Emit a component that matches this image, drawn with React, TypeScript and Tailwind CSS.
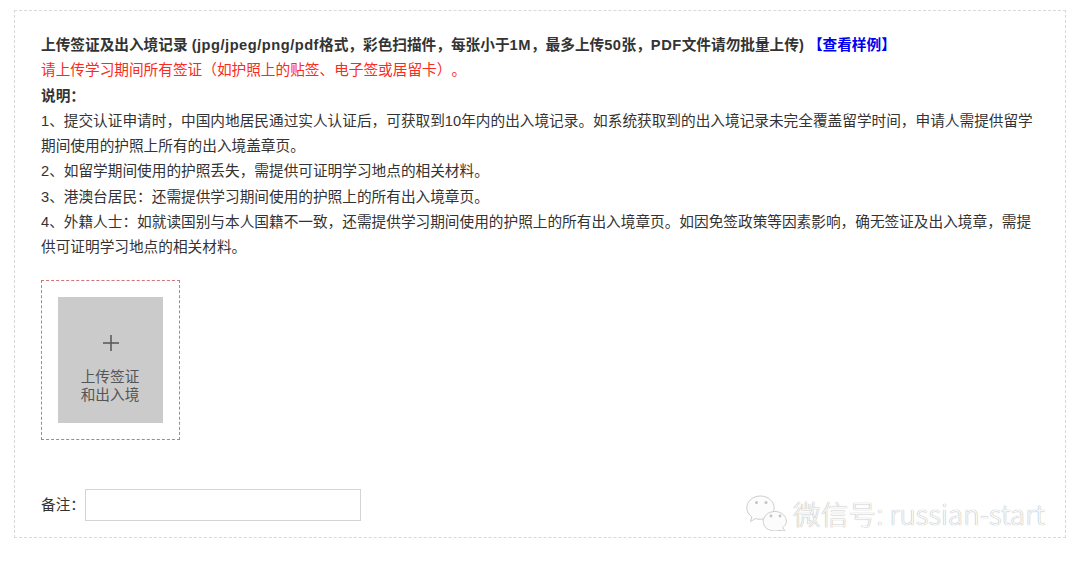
const FONT = 'font-["Liberation_Sans","Noto_Sans_CJK_SC",sans-serif]'

function WechatIcon() {
  return (
    <svg width="41" height="36" viewBox="0 0 41 36" fill="#fcfcfc" stroke="#cdcdcd" strokeWidth="1">
      <path d="M14.500 1C6.800 1 .8 6.300 .8 12.800c0 3.700 2 6.900 5 9l-1.300 4.700 5-2.900c1.600.5 3.200.7 5 .7 7.700 0 13.700-5.300 13.700-11.500S22.200 1 14.500 1z" />
      <path d="M29 16.500c-6.400 0-11.800 4.400-11.800 10s5.400 9.500 11.800 9.500c1.400 0 2.700-.2 4-.6l6 .6-2.400-3.400c2.300-1.700 3.800-3.600 3.800-6.100 0-5.600-5-10-11.400-10z" />
      <circle cx="10.500" cy="7.500" r="1.500" fill="#c4c4c4" stroke="none" />
      <circle cx="20" cy="7.500" r="1.500" fill="#c4c4c4" stroke="none" />
      <circle cx="25" cy="21" r="1.400" fill="#c4c4c4" stroke="none" />
      <circle cx="34" cy="21" r="1.400" fill="#c4c4c4" stroke="none" />
    </svg>
  )
}

function Latin({ children }: { children: string }) {
  return <span className="tracking-[0.5px]">{children}</span>
}

export default function App() {
  return (
    <div className={`w-[1080px] h-[562px] bg-white pt-[10px] pl-[14px] overflow-hidden [text-spacing-trim:space-all] ${FONT}`}>
      <div className="relative w-[1052px] h-[528px] border border-dashed border-[#d9d9d9] pl-[26px] pr-[24px] pt-[22px]">
        <div className="text-[14.67px] leading-[25.3px] text-[#333333]">
          <p className="font-bold whitespace-nowrap">
            上传签证及出入境记录 <Latin>(jpg/jpeg/png/pdf</Latin>格式，彩色扫描件，每张小于<Latin>1M</Latin>，最多上传<Latin>50</Latin>张，<Latin>PDF</Latin>文件请勿批量上传) <span className="text-[#0000ee]">【查看样例】</span>
          </p>
          <p className="text-[#fa2a1e]">请上传学习期间所有签证（如护照上的贴签、电子签或居留卡）。</p>
          <p className="font-bold">说明：</p>
          <p>1、提交认证申请时，中国内地居民通过实人认证后，可获取到10年内的出入境记录。如系统获取到的出入境记录未完全覆盖留学时间，申请人需提供留学期间使用的护照上所有的出入境盖章页。</p>
          <p>2、如留学期间使用的护照丢失，需提供可证明学习地点的相关材料。</p>
          <p>3、港澳台居民：还需提供学习期间使用的护照上的所有出入境章页。</p>
          <p>4、外籍人士：如就读国别与本人国籍不一致，还需提供学习期间使用的护照上的所有出入境章页。如因免签政策等因素影响，确无签证及出入境章，需提供可证明学习地点的相关材料。</p>
        </div>

        <div className="mt-[19px] w-[139px] h-[160px] border border-dashed border-[#d0757a] pt-[16px] pl-[16px]">
          <div className="w-[105px] h-[126px] bg-[#cbcbcb] flex flex-col items-center pt-[38px] text-[#555555]">
            <svg width="16" height="16" viewBox="0 0 16 16" stroke="#555555" strokeWidth="1.500">
              <path d="M0 8h16M8 0v16" />
            </svg>
            <div className="mt-[17px] text-center text-[14.67px] leading-[18.5px] -translate-x-[0.5px]">
              上传签证
              <br />
              和出入境
            </div>
          </div>
        </div>

        <div className="mt-[49px] flex items-center">
          <span className="text-[14.67px] text-[#333333] w-[44px] whitespace-nowrap">备注：</span>
          <input className="w-[276px] h-[32px] border border-[#d4d4d4] bg-white outline-none" />
        </div>

        <div className="absolute left-[731px] top-[484px] flex items-center gap-[6px] text-[27.8px] leading-[36px] text-[#f8f8f8] [text-shadow:0_0_1px_#8c8c8c]">
          <WechatIcon />
          <span className="font-['Noto_Sans_CJK_SC',sans-serif] font-light whitespace-nowrap">微信号: russian-start</span>
        </div>
      </div>
    </div>
  )
}
